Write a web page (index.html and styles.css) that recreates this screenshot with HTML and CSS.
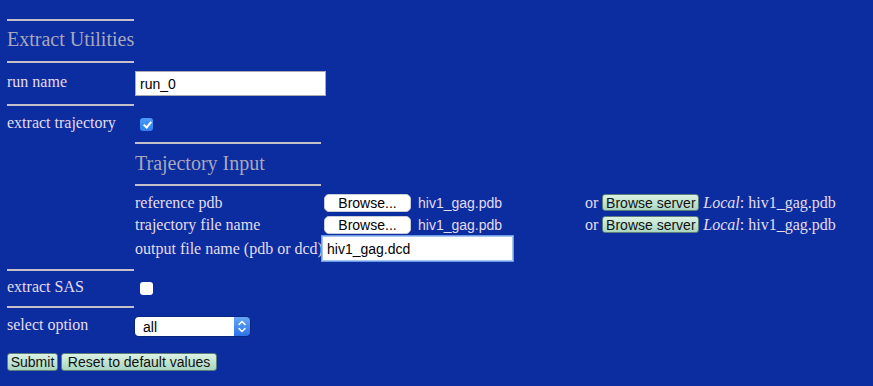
FILE: index.html
```html
<!DOCTYPE html>
<html lang="en">
<head>
<meta charset="utf-8">
<title>Extract Utilities</title>
<link rel="stylesheet" href="styles.css">
</head>
<body>
<form class="form">
  <div class="rule rule-main"></div>
  <h3 class="title">Extract Utilities</h3>
  <div class="rule rule-main"></div>

  <div class="row row-name">
    <span class="label">run name</span>
    <input class="text" type="text" value="run_0">
  </div>
  <div class="rule rule-main"></div>

  <div class="row row-traj">
    <span class="label">extract trajectory</span>
    <input class="check" type="checkbox" checked>
  </div>

  <div class="sub">
    <div class="rule rule-sub"></div>
    <h3 class="title sub-title">Trajectory Input</h3>
    <div class="rule rule-sub"></div>
    <div class="files">
      <span class="flabel">reference pdb</span>
      <span class="file"><button type="button" class="browse">Browse...</button><span class="fname">hiv1_gag.pdb</span></span>
      <span class="server">or <button type="button" class="gbtn srv">Browse server</button> <i>Local</i>: hiv1_gag.pdb</span>

      <span class="flabel">trajectory file name</span>
      <span class="file"><button type="button" class="browse">Browse...</button><span class="fname">hiv1_gag.pdb</span></span>
      <span class="server">or <button type="button" class="gbtn srv">Browse server</button> <i>Local</i>: hiv1_gag.pdb</span>

      <span class="flabel">output file name (pdb or dcd)</span>
      <span class="file"><input class="text out" type="text" value="hiv1_gag.dcd"></span>
      <span></span>
    </div>
  </div>

  <div class="rule rule-main"></div>
  <div class="row row-sas">
    <span class="label">extract SAS</span>
    <input class="check" type="checkbox">
  </div>
  <div class="rule rule-main"></div>

  <div class="row row-select">
    <span class="label">select option</span>
    <span class="select">
      <select class="select-box"><option>all</option></select>
      <span class="select-arrows">
        <svg width="16" height="19" viewBox="0 0 16 19"><path d="M5 7.5 L8 4.5 L11 7.5 M5 11.5 L8 14.5 L11 11.5" fill="none" stroke="#fff" stroke-width="1.5" stroke-linecap="round" stroke-linejoin="round"/></svg>
      </span>
    </span>
  </div>

  <div class="actions">
    <button type="submit" class="gbtn submit">Submit</button>
    <button type="reset" class="gbtn reset">Reset to default values</button>
  </div>
</form>
</body>
</html>
```

FILE: styles.css
```css
* { box-sizing: border-box; }

body {
  margin: 0;
  background: #0b2d9f;
  font-family: "Liberation Serif", "Times New Roman", serif;
  font-size: 16px;
  color: #e4dcee;
}

.form {
  display: flex;
  flex-direction: column;
  align-items: flex-start;
  padding: 19px 0 0 7px;
}

.rule {
  height: 0;
  border-top: 2px solid #c4c0ca;
}
.rule-main { width: 127px; }
.rule-sub { width: 186px; }

.title {
  margin: 8px 0 12px;
  font-size: 20px;
  line-height: 20px;
  font-weight: normal;
  color: #a9a7bc;
  white-space: nowrap;
}
.sub-title { margin: 9px 0 11px; }

.row {
  display: grid;
  grid-template-columns: 128px auto;
  align-items: center;
}
.row-name { height: 41px; }
.row-traj { height: 36px; }
.row-sas { height: 35px; }
.row-select { height: 37px; }

.label {
  padding-bottom: 3px;
  white-space: nowrap;
}

.text {
  width: 191px;
  height: 25px;
  margin: 0;
  padding: 0 4px;
  border: 1px solid #a9a9b4;
  background: #fff;
  font-family: "Liberation Sans", Arial, sans-serif;
  font-size: 14px;
  color: #000;
  outline: none;
}
.out {
  border: 1px solid #a8c6f4;
  box-shadow: 0 0 0 1px #6c9ae6;
  caret-color: #000;
}

.check {
  appearance: none;
  -webkit-appearance: none;
  width: 13px;
  height: 13px;
  margin: 0 0 0 5px;
  border-radius: 3px;
  background: #fff;
}
.check:checked {
  background: linear-gradient(#4c9bf8, #2f7ff0);
}
.check:checked::after {
  content: "";
  display: block;
  width: 3px;
  height: 6px;
  margin: 2px 0 0 5px;
  border-right: 2px solid #fff;
  border-bottom: 2px solid #fff;
  transform: rotate(40deg);
}

.sub {
  margin-left: 128px;
}

.files {
  display: grid;
  grid-template-columns: 187px 263px auto;
  grid-template-rows: 22px 22px 25px;
  align-items: center;
  margin: 6px 0 8px;
}

.flabel { white-space: nowrap; }

.file {
  display: flex;
  align-items: center;
}

.browse {
  width: 87px;
  height: 18px;
  margin: 0 0 0 2px;
  padding: 0;
  border: 1px solid #c9cbd6;
  border-radius: 5px;
  background: #fff;
  font-family: "Liberation Sans", Arial, sans-serif;
  font-size: 14px;
  line-height: 16px;
  color: #000;
}

.fname {
  margin-left: 7px;
  font-family: "Liberation Sans", Arial, sans-serif;
  font-size: 14px;
  color: #e2dcf0;
}

.server {
  white-space: nowrap;
}

.gbtn {
  height: 18px;
  margin: 0;
  padding: 0;
  border: 1px solid #5e7f79;
  border-radius: 3px;
  background: linear-gradient(#daf2e4, #a9d6c0);
  font-family: "Liberation Sans", Arial, sans-serif;
  font-size: 14px;
  line-height: 16px;
  color: #111;
  vertical-align: baseline;
}
.srv {
  width: 97px;
  height: 17px;
}

.select {
  display: inline-flex;
  width: 115px;
  height: 19px;
  border-radius: 4px;
  overflow: hidden;
  box-shadow: 0 0 0 0.5px rgba(0, 0, 0, 0.35);
}
.select-box {
  appearance: none;
  -webkit-appearance: none;
  flex: 1;
  height: 19px;
  margin: 0;
  padding: 0 0 0 8px;
  border: 0;
  background: #fff;
  font-family: "Liberation Sans", Arial, sans-serif;
  font-size: 14px;
  color: #000;
  outline: none;
}
.select-arrows {
  display: flex;
  width: 16px;
  height: 19px;
  background: linear-gradient(#67a6f8, #2b72e8);
}

.actions {
  display: flex;
  gap: 3px;
  margin-top: 8px;
}
.submit { width: 51px; }
.reset { width: 156px; }
```
